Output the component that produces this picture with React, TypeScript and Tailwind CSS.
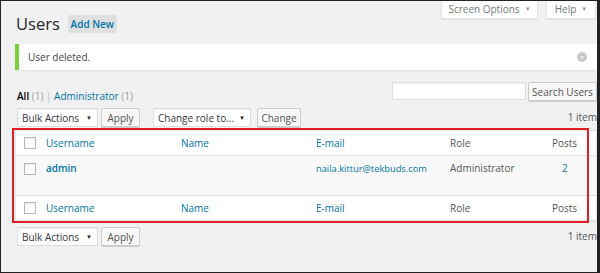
import React from "react";

const font = { fontFamily: '"Open Sans", "Noto Sans", sans-serif' };

function Caret() {
  return <span className="ml-[5px] text-[6px] text-[#999]">▼</span>;
}

function Select({ label, w }: { label: string; w: string }) {
  return (
    <div className={`${w} h-[19px] bg-white border border-[#ddd] shadow-[inset_0_1px_2px_rgba(0,0,0,0.07)] flex items-center justify-between pl-[4px] pr-[5px] text-[10px] leading-[12px] text-[#32373c] whitespace-nowrap`}>
      <span>{label}</span>
      <span className="text-[6px] text-[#222]">▼</span>
    </div>
  );
}

function Button({ label, w }: { label: string; w: string }) {
  return (
    <div className={`${w} h-[19px] bg-[#f7f7f7] border border-[#ccc] rounded-[2px] shadow-[0_1px_0_#ccc] flex items-center justify-center text-[10px] leading-[12px] text-[#555] whitespace-nowrap`}>
      {label}
    </div>
  );
}

function Check() {
  return <div className="w-[12px] h-[12px] border border-[#b4b9be] bg-white shadow-[inset_0_1px_2px_rgba(0,0,0,0.1)]" />;
}

function HeadRow({ border }: { border: "b" | "t" }) {
  return (
    <div className={`flex items-center h-[25px] text-[10px] leading-[14px] ${border === "b" ? "border-b border-[#e1e1e1]" : "border-t border-[#e1e1e1]"}`}>
      <div className="w-[30px] pl-[8px] flex items-center"><Check /></div>
      <div className="w-[135px] text-[#0073aa]">Username</div>
      <div className="w-[135px] text-[#0073aa]">Name</div>
      <div className="w-[134px] text-[#0073aa]">E-mail</div>
      <div className="w-[102px] text-[#555]">Role</div>
      <div className="text-[#555]">Posts</div>
    </div>
  );
}

export default function App() {
  return (
    <div style={font} className="relative w-[600px] h-[273px] overflow-hidden bg-[#f1f1f1] border-t border-l border-b border-r-[3px] border-[#222]">
      <div className="w-[582px] ml-[14px]">
        {/* header */}
        <div className="flex justify-between items-start h-[33px]">
          <div className="flex items-center pt-[13px] gap-[8px] pl-[1px]">
            <span className="text-[16.5px] leading-[20px] text-[#23282d]">Users</span>
            <span className="h-[18px] w-[49px] bg-[#e0e0e0] text-[#0073aa] text-[10px] font-semibold flex items-center justify-center rounded-[2px]">Add New</span>
          </div>
          <div className="flex gap-[8px] mr-[1px] mt-[-1px]">
            <div className="h-[19px] w-[97px] bg-white shadow-[0_1px_1px_rgba(0,0,0,0.06)] border-x border-b border-[#e5e5e5] flex items-center justify-center text-[10px] text-[#72777c]">
              Screen Options<Caret />
            </div>
            <div className="h-[19px] w-[50px] bg-white shadow-[0_1px_1px_rgba(0,0,0,0.06)] border-x border-b border-[#e5e5e5] flex items-center justify-center text-[10px] text-[#72777c]">
              Help<Caret />
            </div>
          </div>
        </div>
        {/* notice */}
        <div className="mt-[10px] h-[26px] bg-white border-l-[4px] border-[#7ad03a] shadow-[0_1px_1px_rgba(0,0,0,0.05)] flex items-center justify-between pl-[9px] pr-[10px]">
          <span className="text-[10px] text-[#444]">User deleted.</span>
          <span className="w-[10px] h-[10px] rounded-full bg-[#c4c8cc] flex items-center justify-center text-white text-[8px] leading-none">×</span>
        </div>
        {/* filter row */}
        <div className="flex justify-between items-start mt-[12px] h-[20px]">
          <div className="pt-[8px] text-[10px] leading-[12px] pl-[2px]">
            <span className="text-[#000] font-semibold">All</span>
            <span className="text-[#999]"> (1)</span>
            <span className="text-[#bbb]"> | </span>
            <span className="text-[#0073aa]">Administrator</span>
            <span className="text-[#999]"> (1)</span>
          </div>
          <div className="flex gap-[2px]">
            <div className="w-[134px] h-[18px] bg-white border border-[#ddd] shadow-[inset_0_1px_2px_rgba(0,0,0,0.07)]" />
            <Button label="Search Users" w="w-[69px]" />
          </div>
        </div>
        {/* tablenav top */}
        <div className="flex items-center mt-[6px] pl-[2px] h-[19px]">
          <Select label="Bulk Actions" w="w-[81px]" />
          <div className="ml-[3px]"><Button label="Apply" w="w-[39px]" /></div>
          <div className="ml-[13px]"><Select label="Change role to..." w="w-[98px]" /></div>
          <div className="ml-[6px]"><Button label="Change" w="w-[44px]" /></div>
          <div className="ml-auto text-[10px] text-[#555]">1 item</div>
        </div>
        {/* table */}
        <div className="mt-[3px] bg-white border border-[#e5e5e5] shadow-[0_1px_1px_rgba(0,0,0,0.04)]">
          <HeadRow border="b" />
          <div className="flex items-start h-[39px] pt-[5px] bg-[#f9f9f9] text-[10px] leading-[15px]">
            <div className="w-[30px] pl-[8px] pt-[2px] flex items-center"><Check /></div>
            <div className="w-[135px] text-[#0073aa] font-semibold">admin</div>
            <div className="w-[135px]" />
            <div className="w-[134px] text-[#0073aa] text-[9.3px]">naila.kittur@tekbuds.com</div>
            <div className="w-[102px] text-[#555]">Administrator</div>
            <div className="pl-[10px] text-[#0073aa]">2</div>
          </div>
          <HeadRow border="t" />
        </div>
        {/* tablenav bottom */}
        <div className="flex items-center mt-[6px] pl-[2px] h-[19px]">
          <Select label="Bulk Actions" w="w-[81px]" />
          <div className="ml-[3px]"><Button label="Apply" w="w-[39px]" /></div>
          <div className="ml-auto text-[10px] text-[#555]">1 item</div>
        </div>
      </div>
      {/* red annotation box */}
      <div className="absolute left-[11px] top-[127px] w-[577px] h-[95px] border-2 border-[#e31e24] pointer-events-none" />
    </div>
  );
}
